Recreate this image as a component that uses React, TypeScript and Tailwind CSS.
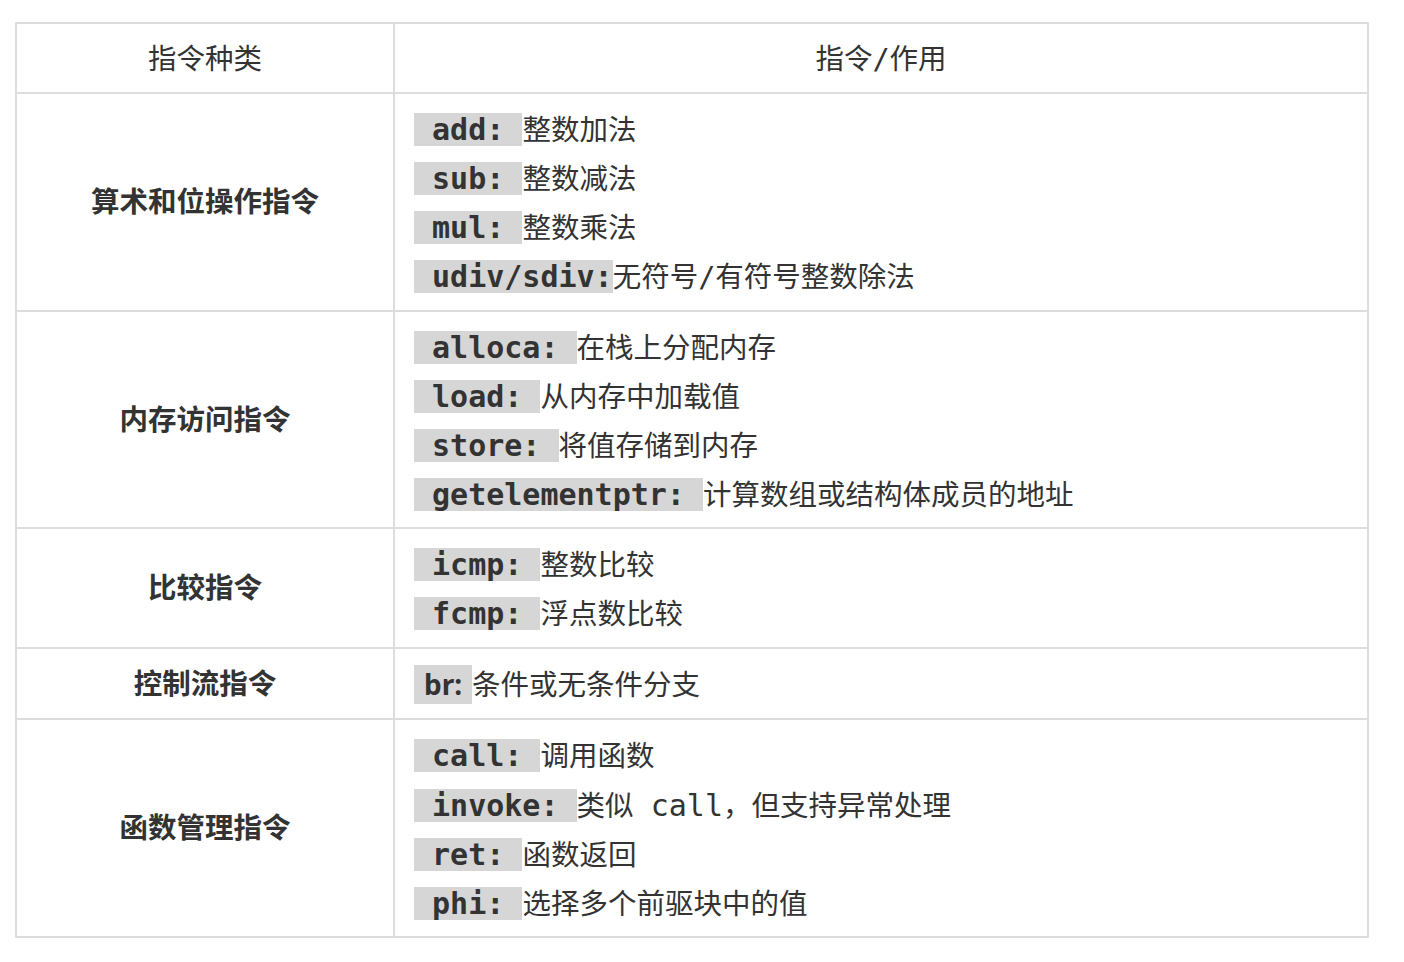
type Line = { code: string; text: React.ReactNode };

type Group = { label: string; lines: Line[]; plain?: boolean };

const groups: Group[] = [
  {
    label: '算术和位操作指令',
    lines: [
      { code: ' add: ', text: '整数加法' },
      { code: ' sub: ', text: '整数减法' },
      { code: ' mul: ', text: '整数乘法' },
      { code: ' udiv/sdiv:', text: '无符号/有符号整数除法' },
    ],
  },
  {
    label: '内存访问指令',
    lines: [
      { code: ' alloca: ', text: '在栈上分配内存' },
      { code: ' load: ', text: '从内存中加载值' },
      { code: ' store: ', text: '将值存储到内存' },
      { code: ' getelementptr: ', text: '计算数组或结构体成员的地址' },
    ],
  },
  {
    label: '比较指令',
    lines: [
      { code: ' icmp: ', text: '整数比较' },
      { code: ' fcmp: ', text: '浮点数比较' },
    ],
  },
  {
    label: '控制流指令',
    plain: true,
    lines: [{ code: 'br:', text: '条件或无条件分支' }],
  },
  {
    label: '函数管理指令',
    lines: [
      { code: ' call: ', text: '调用函数' },
      {
        code: ' invoke: ',
        text: (
          <>
            类似 <span className="text-[30px]">call</span>，但支持异常处理
          </>
        ),
      },
      { code: ' ret: ', text: '函数返回' },
      { code: ' phi: ', text: '选择多个前驱块中的值' },
    ],
  },
];

const cjk = "font-['DejaVu_Sans_Mono','Noto_Sans_CJK_SC',monospace]";

export default function App() {
  return (
    <div className="min-h-screen bg-white pl-[15px] pt-[22px]">
      <table
        className={`w-[1354px] border-collapse border-2 border-[#dddddd] text-[28.5px] text-[#333333] ${cjk}`}
      >
        <thead>
          <tr>
            <th className="w-[378px] border-2 border-[#dddddd] pb-[8.5px] pt-[10.5px] text-center font-normal leading-[49px]">
              指令种类
            </th>
            <th className="border-2 border-[#dddddd] pb-[8.5px] pt-[10.5px] text-center font-normal leading-[49px]">
              指令/作用
            </th>
          </tr>
        </thead>
        <tbody>
          {groups.map((g) => (
            <tr key={g.label}>
              <td className="border-2 border-[#dddddd] pt-[3px] text-center align-middle font-bold">
                {g.label}
              </td>
              <td className="border-2 border-[#dddddd] pb-[7.7px] pt-[12px] pl-[19px]">
                {g.lines.map((l) => (
                  <div key={l.code} className="leading-[49px]">
                    {g.plain ? (
                      <span className="inline-block bg-[#d6d6d6] px-[10px] font-['Noto_Sans',sans-serif] text-[28px] font-bold leading-[39px]">
                        {l.code}
                      </span>
                    ) : (
                      <span className="inline-block whitespace-pre bg-[#d6d6d6] font-['DejaVu_Sans_Mono',monospace] text-[30px] font-bold leading-[33px]">
                        {l.code}
                      </span>
                    )}
                    {l.text}
                  </div>
                ))}
              </td>
            </tr>
          ))}
        </tbody>
      </table>
    </div>
  );
}
